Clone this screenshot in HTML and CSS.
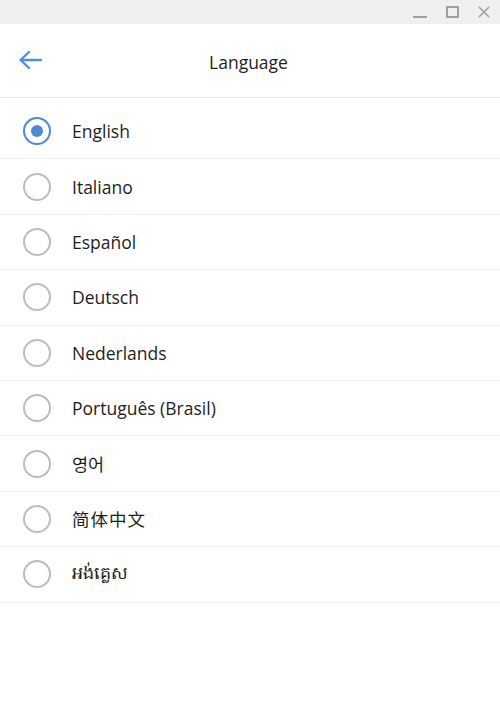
FILE: index.html
```html
<!DOCTYPE html>
<html>
<head>
<meta charset="utf-8">
<link rel="stylesheet" href="styles.css">
</head>
<body>
<div class="titlebar">
  <span class="tb-btn">
    <svg width="14" height="14" viewBox="0 0 14 14"><rect x="0" y="11" width="14" height="2" fill="#a0a0a0"/></svg>
  </span>
  <span class="tb-btn">
    <svg width="13" height="12" viewBox="0 0 13 12"><rect x="1" y="1" width="11" height="10" fill="none" stroke="#a0a0a0" stroke-width="2"/></svg>
  </span>
  <span class="tb-btn">
    <svg width="12" height="12" viewBox="0 0 12 12"><path d="M1 1 L11 11 M11 1 L1 11" stroke="#a0a0a0" stroke-width="1.6"/></svg>
  </span>
</div>
<div class="header">
  <span class="back">
    <svg width="24" height="20" viewBox="0 0 24 20"><path d="M23 10 H3 M11 2 L2.5 10 L11 18" fill="none" stroke="#4a90e2" stroke-width="2.4" stroke-linecap="round" stroke-linejoin="round"/></svg>
  </span>
  <span class="title">Language</span>
</div>
<ul class="list">
  <li class="row"><span class="radio checked"></span><span class="label">English</span></li>
  <li class="row"><span class="radio"></span><span class="label">Italiano</span></li>
  <li class="row"><span class="radio"></span><span class="label">Español</span></li>
  <li class="row"><span class="radio"></span><span class="label">Deutsch</span></li>
  <li class="row"><span class="radio"></span><span class="label">Nederlands</span></li>
  <li class="row"><span class="radio"></span><span class="label">Português (Brasil)</span></li>
  <li class="row"><span class="radio"></span><span class="label">영어</span></li>
  <li class="row"><span class="radio"></span><span class="label cjk">简体中文</span></li>
  <li class="row"><span class="radio"></span><span class="label">អង់គ្លេស</span></li>
</ul>
</body>
</html>
```
FILE: styles.css
```css
html, body {
  margin: 0;
  padding: 0;
  background: #ffffff;
}
body {
  width: 500px;
  height: 718px;
  font-family: "Open Sans", "Noto Sans", "Noto Sans CJK KR", "Noto Sans CJK SC", sans-serif;
  color: #1e1e1e;
  overflow: hidden;
}
.titlebar {
  height: 24px;
  background: #f0f0f0;
  display: flex;
  justify-content: flex-end;
  align-items: center;
  padding-right: 9px;
  gap: 18px;
}
.tb-btn {
  display: flex;
  width: 14px;
  height: 14px;
  align-items: center;
  justify-content: center;
}
.header {
  height: 73px;
  border-bottom: 1px solid #e6e6e6;
  position: relative;
  display: flex;
  align-items: center;
  justify-content: center;
}
.back {
  position: absolute;
  left: 18px;
  top: 26px;
  display: flex;
}
.title {
  font-size: 17.5px;
  color: #1e1e1e;
  margin-top: 2px;
  margin-left: -3px;
}
.list {
  list-style: none;
  margin: 0;
  padding: 6px 0 0 0;
}
.row {
  height: 54.4px;
  border-bottom: 1px solid #f0f0f0;
  display: flex;
  align-items: center;
}
.radio {
  box-sizing: border-box;
  width: 28px;
  height: 28px;
  border: 2px solid #bdbdbd;
  border-radius: 50%;
  margin-left: 23px;
  margin-right: 21px;
  display: flex;
  align-items: center;
  justify-content: center;
}
.radio.checked {
  border-color: #4f88d8;
}
.radio.checked::after {
  content: "";
  width: 12px;
  height: 12px;
  border-radius: 50%;
  background: #4f88d8;
}
.label {
  font-size: 17.5px;
  color: #1e1e1e;
}
.cjk {
  font-family: "Noto Sans CJK SC", sans-serif;
  letter-spacing: 1px;
}
```
